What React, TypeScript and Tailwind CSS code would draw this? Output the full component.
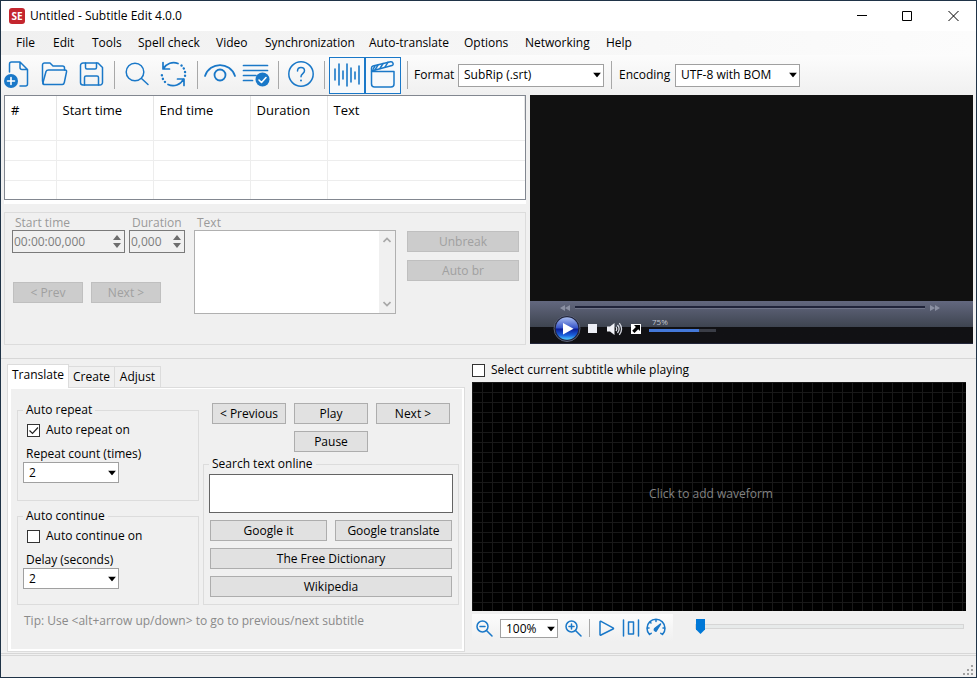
import type { ReactNode } from 'react';

const menuItems = [
  { label: 'File', width: 'w-[37px]' },
  { label: 'Edit', width: 'w-[39px]' },
  { label: 'Tools', width: 'w-[46px]' },
  { label: 'Spell check', width: 'w-[78px]' },
  { label: 'Video', width: 'w-[49px]' },
  { label: 'Synchronization', width: 'w-[104px]' },
  { label: 'Auto-translate', width: 'w-[95px]' },
  { label: 'Options', width: 'w-[61px]' },
  { label: 'Networking', width: 'w-[81px]' },
  { label: 'Help', width: 'w-[40px]' },
];

const columns = [
  { label: '#', width: 'w-[51px]' },
  { label: 'Start time', width: 'w-[97px]' },
  { label: 'End time', width: 'w-[97px]' },
  { label: 'Duration', width: 'w-[77px]' },
  { label: 'Text', width: '' },
];

const Icon = ({ children, className = 'w-7 h-7', box = '0 0 28 28' }: { children: ReactNode; className?: string; box?: string }) => (
  <svg
    viewBox={box}
    className={`shrink-0 ${className}`}
    fill="none"
    stroke="#1a78c8"
    strokeWidth="1.5"
    strokeLinecap="round"
    strokeLinejoin="round"
    aria-hidden="true"
  >
    {children}
  </svg>
);

const ToolButton = ({ label, className = '', children }: { label: string; className?: string; children: ReactNode }) => (
  <button type="button" aria-label={label} className={`flex shrink-0 items-center justify-center ${className}`}>
    {children}
  </button>
);

const Separator = ({ className = '' }: { className?: string }) => (
  <span className={`w-px shrink-0 bg-[#a8a8a8] ${className}`} />
);

const Select = ({ id, label, value, className = '' }: { id: string; label?: string; value: string; className?: string }) => (
  <span className={`relative flex shrink-0 ${className}`}>
    <select id={id} aria-label={label} className="h-full w-full appearance-none border border-[#a0a0a0] bg-white px-[5px] leading-4">
      <option>{value}</option>
    </select>
    <svg viewBox="0 0 8 5" className="pointer-events-none absolute right-[3px] top-1/2 h-[5px] w-2 -translate-y-1/2" aria-hidden="true">
      <path d="M0 0h8L4 5z" fill="#000" />
    </svg>
  </span>
);

const CheckBox = ({ label, checked = false }: { label: string; checked?: boolean }) => (
  <label className="flex h-4 items-center gap-[6px]">
    <span className="relative flex">
      <input type="checkbox" defaultChecked={checked} className="peer h-[13px] w-[13px] appearance-none border border-[#333] bg-white" />
      <svg viewBox="0 0 13 13" className="pointer-events-none absolute inset-0 hidden h-[13px] w-[13px] peer-checked:block" aria-hidden="true">
        <path d="M2.500 6.500l3 3L11 3.500" fill="none" stroke="#222" strokeWidth="1.2" />
      </svg>
    </span>
    <span>{label}</span>
  </label>
);

const PushButton = ({ label, className = '' }: { label: string; className?: string }) => (
  <button
    type="button"
    className={`flex h-[21px] items-center justify-center whitespace-nowrap border border-[#adadad] bg-[#e1e1e1] leading-4 ${className}`}
  >
    {label}
  </button>
);

const DisabledButton = ({ label, className = '' }: { label: string; className?: string }) => (
  <button
    type="button"
    disabled
    className={`flex h-[21px] items-center justify-center border border-[#bfbfbf] bg-[#cccccc] leading-4 text-[#a0a0a0] ${className}`}
  >
    {label}
  </button>
);

const Spinner = ({ id, label, value, className }: { id: string; label: string; value: string; className: string }) => (
  <div className={`flex flex-col ${className}`}>
    <label htmlFor={id} className="h-4 pl-[3px] leading-[18px] text-[#9a9a9a]">{label}</label>
    <div className="flex h-[23px] items-center border border-[#7a7a7a] pr-[3px]">
      <input id={id} disabled defaultValue={value} className="min-w-0 flex-1 pl-px leading-4 text-[#7d7d7d]" />
      <svg viewBox="0 0 8 13" className="h-[13px] w-2" fill="#6d6d6d" aria-hidden="true">
        <path d="M4 0l4 5H0zM0 8h8l-4 5z" />
      </svg>
    </div>
  </div>
);

const TitleBar = () => (
  <header className="flex h-[30px] items-center bg-white pl-2">
    <span className="flex h-4 w-4 items-center justify-center rounded-[3px] bg-[#c4262e] text-[10px] font-bold leading-4 text-white">SE</span>
    <h1 className="flex-1 pl-[5px]">Untitled - Subtitle Edit 4.0.0</h1>
    <ToolButton label="Minimize" className="h-full w-[46px]">
      <svg viewBox="0 0 11 11" className="h-[11px] w-[11px]" stroke="#000"><path d="M0 4.500h10" /></svg>
    </ToolButton>
    <ToolButton label="Maximize" className="h-full w-[45px]">
      <svg viewBox="0 0 11 11" className="h-[11px] w-[11px]" fill="none" stroke="#000"><path d="M.5.5h9v9h-9z" /></svg>
    </ToolButton>
    <ToolButton label="Close" className="h-full w-[46px]">
      <svg viewBox="0 0 11 11" className="h-[11px] w-[11px]" stroke="#000"><path d="M.5 0l10 10M10.500 0l-10 10" /></svg>
    </ToolButton>
  </header>
);

const MenuBar = () => (
  <nav className="flex h-6 items-center bg-linear-to-r from-[#f0f0f0] to-[#fcfcfc] pl-[15px]">
    {menuItems.map((item) => (
      <button key={item.label} type="button" className={`shrink-0 whitespace-nowrap text-left ${item.width}`}>
        {item.label}
      </button>
    ))}
  </nav>
);

const ToolBar = () => (
  <div className="flex h-10 items-center bg-linear-to-b from-[#fcfcfc] to-[#f0f0f0] pl-[2px]">
    <ToolButton label="New" className="mr-[10px]">
      <Icon>
        <path d="M6.500 11V3a2 2 0 0 1 2-2h8.500l7.500 7.500V23a2 2 0 0 1-2 2H17M17 1v5.500a2 2 0 0 0 2 2h5" />
        <circle cx="8" cy="20" r="7" fill="#1a78c8" stroke="none" />
        <path d="M8 16.500v7M4.500 20h7" stroke="#fff" strokeWidth="1.600" />
      </Icon>
    </ToolButton>
    <ToolButton label="Open" className="mr-[10px]">
      <Icon>
        <path d="M2.500 23L1.500 20V4a2 2 0 0 1 2-2H9l3 3h9.500a2 2 0 0 1 2 2v2" />
        <path d="M7.500 9H24q2 0 1.500 2l-2.200 10.500q-.4 2-2 2H3q-1.500 0-1-2L5 10.500Q5.500 9 7.500 9z" />
      </Icon>
    </ToolButton>
    <ToolButton label="Save" className="mr-[7px]">
      <Icon>
        <path d="M1.500 4.500A2.500 2.500 0 0 1 4 2h15l4.500 4.500v15A2.500 2.500 0 0 1 21 24H4a2.500 2.500 0 0 1-2.500-2.500z" />
        <path d="M6.500 2v4.500A1.500 1.500 0 0 0 8 8h8a1.500 1.500 0 0 0 1.500-1.500V2M5.500 24v-7.500A1.500 1.500 0 0 1 7 15h11a1.500 1.500 0 0 1 1.500 1.500V24" />
      </Icon>
    </ToolButton>
    <Separator className="mr-[9px] h-7" />
    <ToolButton label="Find" className="mr-[8px]">
      <Icon>
        <circle cx="11" cy="11" r="8.800" />
        <path d="M17.500 17.500l6.500 6" />
      </Icon>
    </ToolButton>
    <ToolButton label="Replace" className="mr-[9px]">
      <Icon>
        <path d="M3.500 7.500A11.500 11.500 0 0 1 18 2.500M3 1.500v6.500h6.500M23.500 18A11.500 11.500 0 0 1 8 23.500M24 24.500V18h-6.500" strokeWidth="1.700" />
        <path d="M21.500 4.500A11.500 11.500 0 0 1 25 15M5 21A11.500 11.500 0 0 1 2 11" strokeWidth="2.400" strokeDasharray=".1 3.600" />
      </Icon>
    </ToolButton>
    <Separator className="mr-[6px] h-7" />
    <ToolButton label="Visual sync" className="mr-[6px]">
      <Icon className="h-7 w-[32px]" box="0 0 32 28">
        <path d="M1 15C6 .5 26 .5 31 15" strokeWidth="1.800" />
        <circle cx="16" cy="14" r="5.500" strokeWidth="1.800" />
      </Icon>
    </ToolButton>
    <ToolButton label="Spell check" className="mr-[8px]">
      <Icon>
        <path d="M1.500 4.500h24M1.500 9.500h24M1.500 14.500H14M1.500 19.500h9" strokeWidth="1.700" />
        <circle cx="20.500" cy="18.500" r="7" fill="#1a78c8" stroke="none" />
        <path d="M17 19l2.500 2.500 4.500-5" stroke="#fff" strokeWidth="1.600" />
      </Icon>
    </ToolButton>
    <Separator className="mr-[8px] h-7" />
    <ToolButton label="Help" className="mr-[9px]">
      <Icon>
        <circle cx="14" cy="13" r="12.200" />
        <path d="M10.500 10q0-3.500 3.500-3.500t3.500 3.200c0 2.800-3.500 3-3.500 6" />
        <circle cx="14" cy="19.500" r="1" fill="#1a78c8" stroke="none" />
      </Icon>
    </ToolButton>
    <Separator className="mr-[4px] h-7" />
    <ToolButton label="Show waveform" className="h-[37px] w-9 border border-[#1a78c8] bg-[#f7f9fb]">
      <Icon>
        <path d="M2 8v11M6 3v21M10 10v8M14 3v22M18 7v14M22 11v7M26 5v18" strokeWidth="1.600" />
      </Icon>
    </ToolButton>
    <ToolButton label="Show video" className="mr-[6px] h-[37px] w-9 border border-[#1a78c8] bg-[#f7f9fb]">
      <Icon>
        <path d="M2.500 10.500h22.500V23a3 3 0 0 1-3 3H5.500a3 3 0 0 1-3-3z" />
        <path d="M2.500 10V7q0-1.500 1.500-2L21.500.800q2-.3 2.500 1.500t-1 2.200z" />
        <path d="M6 8.800L9 4M11 7.500l3-5M16 6.200l3-5M6 4.800l-2 3.500" />
      </Icon>
    </ToolButton>
    <Separator className="mr-[6px] h-7" />
    <label htmlFor="format" className="w-[44px] shrink-0">Format</label>
    <Select id="format" value="SubRip (.srt)" className="mr-[7px] h-[23px] w-[146px]" />
    <Separator className="mr-[7px] h-7" />
    <label htmlFor="encoding" className="w-[56px] shrink-0">Encoding</label>
    <Select id="encoding" value="UTF-8 with BOM" className="h-[23px] w-[125px]" />
  </div>
);

const SubtitleList = () => (
  <div className="border border-[#828790] bg-white">
    <table className="w-full table-fixed border-collapse text-[13px]">
      <thead>
        <tr className="h-6">
          {columns.map((column) => (
            <th key={column.label} scope="col" className={`border-r border-[#e5e5e5] p-0 pl-[6px] pt-[3px] text-left font-normal leading-4 ${column.width}`}>
              {column.label}
            </th>
          ))}
        </tr>
      </thead>
      <tbody>
        {[0, 1, 2, 3].map((row) => (
          <tr key={row} className="h-5 border-b border-[#ededed] last:h-[19px] last:border-b-0">
            {columns.map((column) => (
              <td key={column.label} className="border-r border-[#ededed] p-0 last:border-r-0" />
            ))}
          </tr>
        ))}
      </tbody>
    </table>
  </div>
);

const EditPanel = () => (
  <section className="mt-2 flex h-[133px] border border-[#dcdcdc] pl-[7px] pr-[6px] pt-px">
    <div className="flex w-[182px] flex-col">
      <div className="flex gap-1">
        <Spinner id="start" label="Start time" value="00:00:00,000" className="w-[113px]" />
        <Spinner id="duration" label="Duration" value="0,000" className="w-[56px]" />
      </div>
      <div className="mt-[29px] flex gap-2 pl-px">
        <DisabledButton label="< Prev" className="w-[70px]" />
        <DisabledButton label="Next >" className="w-[70px]" />
      </div>
    </div>
    <div className="flex flex-1 flex-col">
      <label htmlFor="text" className="h-4 pl-[3px] leading-[18px] text-[#9a9a9a]">Text</label>
      <div className="flex h-[84px] border border-[#b0b0b0] bg-white">
        <textarea id="text" disabled className="min-w-0 flex-1 resize-none" />
        <div className="flex w-4 flex-col items-center justify-between bg-[#f0f0f0] py-[6px]">
          <svg viewBox="0 0 8 6" className="h-[6px] w-2" fill="none" stroke="#a8a8a8" strokeWidth="1.700"><path d="M.5 5L4 1.500 7.500 5" /></svg>
          <svg viewBox="0 0 8 6" className="h-[6px] w-2" fill="none" stroke="#a8a8a8" strokeWidth="1.700"><path d="M.5 1L4 4.500 7.500 1" /></svg>
        </div>
      </div>
    </div>
    <div className="ml-[11px] flex w-[112px] flex-col gap-2 pt-[17px]">
      <DisabledButton label="Unbreak" />
      <DisabledButton label="Auto br" />
    </div>
  </section>
);

const VideoPlayer = () => (
  <section className="flex h-[249px] flex-col bg-[#111111]">
    <div className="flex-1" />
    <div className="flex h-[43px] flex-col border-b border-[#23263a] bg-linear-to-b from-[#63687f] from-0% via-[#3e4450] via-62% to-[#111114] to-63%">
      <div className="flex h-[13px] items-center pl-[30px] pr-[33px]">
        <svg viewBox="0 0 10 6" className="h-[6px] w-[10px]" fill="#8b90a2"><path d="M5 0v6L0 3zM10 0v6L5 3z" /></svg>
        <input
          type="range"
          aria-label="Position"
          defaultValue={0}
          className="mx-[5px] h-[3px] min-w-0 flex-1 appearance-none border-b border-[#6f7488] bg-[#20243a] [&::-webkit-slider-thumb]:h-0 [&::-webkit-slider-thumb]:w-0 [&::-webkit-slider-thumb]:appearance-none"
        />
        <svg viewBox="0 0 10 6" className="h-[6px] w-[10px]" fill="#8b90a2"><path d="M0 0v6l5-3zM5 0v6l5-3z" /></svg>
      </div>
      <div className="flex flex-1 items-center pl-[23px]">
        <ToolButton label="Play video" className="mr-[7px]">
          <svg viewBox="0 0 28 28" className="h-7 w-7">
            <defs>
              <linearGradient id="orb" x1="0" y1="0" x2="0" y2="1">
                <stop offset="0" stopColor="#a9bdf0" />
                <stop offset=".48" stopColor="#3553c8" />
                <stop offset=".52" stopColor="#0a1a96" />
                <stop offset=".8" stopColor="#1b62dc" />
                <stop offset="1" stopColor="#4fd0ff" />
              </linearGradient>
            </defs>
            <circle cx="14" cy="13.500" r="13" fill="#20243a" stroke="#5b6176" />
            <circle cx="14" cy="13.500" r="11.300" fill="url(#orb)" />
            <path d="M10 8v11.500l10.500-5.700z" fill="#fff" />
          </svg>
        </ToolButton>
        <ToolButton label="Stop" className="mr-[10px]">
          <span className="h-[9px] w-[9px] bg-[#eceef5]" />
        </ToolButton>
        <ToolButton label="Mute" className="mr-[8px]">
          <svg viewBox="0 0 16 14" className="h-[14px] w-4" fill="none" stroke="#d8dbe4" strokeWidth="1.300">
            <path d="M0 4.500h3L7.500 1v12L3 9.500H0z" fill="#f0f1f6" stroke="none" />
            <path d="M9 5q1.500 2 0 4M10.500 3q3.200 4 0 8M12.300 1.200q4.500 5.800 0 11.600" />
          </svg>
        </ToolButton>
        <ToolButton label="Full screen" className="mr-[8px]">
          <svg viewBox="0 0 10 10" className="h-[10px] w-[10px]">
            <path d="M0 0h10v10H0z" fill="#fff" />
            <path d="M3 1h6v6L7.200 5.200 3.500 9 1.200 6.700 4.900 2.900z" fill="#000" />
          </svg>
        </ToolButton>
        <label className="flex flex-col text-[8px] leading-[10px] text-[#c5c8d2]">
          <span className="pl-[3px]">75%</span>
          <input
            type="range"
            defaultValue={75}
            className="mb-[9px] mt-[2px] h-[3px] w-[67px] appearance-none bg-linear-to-r from-[#4478d8] from-74% to-[#3a3d46] to-74% [&::-webkit-slider-thumb]:h-0 [&::-webkit-slider-thumb]:w-0 [&::-webkit-slider-thumb]:appearance-none"
          />
        </label>
      </div>
    </div>
  </section>
);

const RepeatGroup = ({ title, option, checked, selectId, selectLabel, className = '' }: {
  title: string;
  option: string;
  checked?: boolean;
  selectId: string;
  selectLabel: string;
  className?: string;
}) => (
  <fieldset className={`border border-[#dcdcdc] pl-[5px] ${className}`}>
    <legend className="h-4 px-[3px] leading-4">{title}</legend>
    <div className="flex flex-col items-start">
      <div className="mt-1 pl-1">
        <CheckBox label={option} checked={checked} />
      </div>
      <label htmlFor={selectId} className="mt-2 h-4 pl-[3px] leading-4">{selectLabel}</label>
      <Select id={selectId} value="2" className="h-[21px] w-24" />
    </div>
  </fieldset>
);

const TranslateTab = () => (
  <section className="flex w-[458px] flex-col pt-[5px]">
    <div role="tablist" className="flex h-[23px] items-end">
      <button type="button" role="tab" aria-selected="true" className="z-10 -mb-px h-6 w-[62px] border border-b-0 border-[#dcdcdc] bg-white pb-[3px]">Translate</button>
      <button type="button" role="tab" aria-selected="false" className="h-[21px] w-[46px] border border-b-0 border-l-0 border-[#dcdcdc]">Create</button>
      <button type="button" role="tab" aria-selected="false" className="h-[21px] w-[46px] border border-b-0 border-l-0 border-[#dcdcdc]">Adjust</button>
    </div>
    <div role="tabpanel" className="flex flex-1 flex-col border border-[#dcdcdc] bg-white pb-[2px] pl-[3px] pr-[2px] pt-px">
      <div className="flex-1 bg-[#f0f0f0] pl-[6px] pr-[3px] pt-[13px]">
        <div className="flex gap-1">
          <div className="w-[182px]">
            <RepeatGroup title="Auto repeat" option="Auto repeat on" checked selectId="repeat-count" selectLabel="Repeat count (times)" className="h-[99px]" />
            <RepeatGroup title="Auto continue" option="Auto continue on" selectId="delay" selectLabel="Delay (seconds)" className="mt-[7px] h-[97px]" />
          </div>
          <div className="flex-1">
            <div className="mt-px grid grid-cols-[74px_74px_74px] gap-x-2 gap-y-[7px] pl-[9px]">
              <PushButton label="< Previous" />
              <PushButton label="Play" />
              <PushButton label="Next >" />
              <PushButton label="Pause" className="col-start-2" />
            </div>
            <fieldset className="mt-[4px] h-[149px] border border-[#dcdcdc] px-[5px]">
              <legend className="h-4 px-[3px] leading-4">Search text online</legend>
              <textarea aria-label="Search text online" className="mt-[2px] block h-[39px] w-full resize-none border border-[#646464] bg-white" />
              <div className="flex flex-col gap-[7px] px-px pt-[7px]">
                <div className="grid grid-cols-2 gap-2">
                  <PushButton label="Google it" />
                  <PushButton label="Google translate" />
                </div>
                <PushButton label="The Free Dictionary" />
                <PushButton label="Wikipedia" />
              </div>
            </fieldset>
          </div>
        </div>
        <p className="mt-2 pl-[7px] leading-4 text-[#8a8a8a]">Tip: Use &lt;alt+arrow up/down&gt; to go to previous/next subtitle</p>
      </div>
    </div>
  </section>
);

const Waveform = () => (
  <section className="flex min-w-0 flex-1 flex-col pt-[3px]">
    <CheckBox label="Select current subtitle while playing" />
    <div className="mt-1 flex h-[229px] items-center justify-center bg-black bg-[linear-gradient(#191919_1px,transparent_1px),linear-gradient(90deg,#191919_1px,transparent_1px)] bg-[size:10px_10px] pr-[16px] pb-[6px] text-[#828282]">
      Click to add waveform
    </div>
    <div className="mt-[3px] flex">
      <div className="flex h-[27px] w-[201px] items-center bg-linear-to-b from-[#fcfcfc] to-[#f0f0f0] pl-[3px]">
        <ToolButton label="Zoom out" className="mr-[7px]">
          <Icon className="h-[18px] w-[18px]" box="0 0 18 18">
            <circle cx="7.500" cy="7.500" r="5.500" />
            <path d="M11.500 11.500l5.500 5.500M5 7.500h5" />
          </Icon>
        </ToolButton>
        <Select id="zoom" label="Zoom" value="100%" className="mr-[6px] mt-[2px] h-[19px] w-[58px]" />
        <ToolButton label="Zoom in" className="mr-[7px]">
          <Icon className="h-[18px] w-[18px]" box="0 0 18 18">
            <circle cx="7.500" cy="7.500" r="5.500" />
            <path d="M11.500 11.500l5.500 5.500M5 7.500h5M7.500 5v5" />
          </Icon>
        </ToolButton>
        <Separator className="mr-[8px] h-[18px]" />
        <ToolButton label="Play waveform" className="mr-[6px]">
          <Icon className="h-[18px] w-[18px]" box="0 0 18 18">
            <path d="M2 3v12.500q0 1 1 .5l12-6q1-.6 0-1.200L3 2.300Q2 2 2 3z" />
          </Icon>
        </ToolButton>
        <ToolButton label="Center" className="mr-[6px]">
          <Icon className="h-[18px] w-[18px]" box="0 0 18 18">
            <path d="M1.500 1v16M16.500 1v16M6.500 3h5v12h-5z" />
          </Icon>
        </ToolButton>
        <ToolButton label="Playback speed">
          <Icon className="h-[20px] w-[20px]" box="0 0 20 20">
            <path d="M3.500 16.500A9 9 0 1 1 16.500 16.500M3.500 16.500l1.700-1.200M16.500 16.500l-1.700-1.200M10 1.500v2M1.500 10h1.500M17 10h1.500M4 4l1 1" />
            <path d="M8.300 12l1 1 .8.200L14.500 6 8.700 10.500z" fill="#1a78c8" />
          </Icon>
        </ToolButton>
      </div>
      <input
        type="range"
        aria-label="Scroll position"
        defaultValue={0}
        className="ml-[22px] mr-[2px] mt-[10px] h-[5px] min-w-0 flex-1 appearance-none border border-[#d6d6d6] bg-[#e7eaea] [&::-webkit-slider-thumb]:h-[15px] [&::-webkit-slider-thumb]:w-[9px] [&::-webkit-slider-thumb]:appearance-none [&::-webkit-slider-thumb]:bg-[#0078d7] [&::-webkit-slider-thumb]:[clip-path:polygon(0_0,100%_0,100%_70%,50%_100%,0_70%)]"
      />
    </div>
  </section>
);

const StatusBar = () => (
  <footer className="mt-px flex h-[22px] items-end justify-end border-t border-[#d7d7d7] pb-[2px] pr-[3px]">
    <svg viewBox="0 0 10 10" className="h-[10px] w-[10px]" fill="#a0a0a0" aria-hidden="true">
      <path d="M8 0h2v2H8zM4 4h2v2H4zM8 4h2v2H8zM0 8h2v2H0zM4 8h2v2H4zM8 8h2v2H8z" />
    </svg>
  </footer>
);

export default function App() {
  return (
    <div className="flex min-h-screen flex-col border border-[#1f3347] bg-[#f0f0f0] font-['Open_Sans','Noto_Sans',sans-serif] text-[12px] leading-4 text-black">
      <TitleBar />
      <MenuBar />
      <ToolBar />
      <main className="flex flex-1 flex-col">
        <div className="grid grid-cols-[522fr_443fr] gap-1 px-[3px]">
          <div>
            <div className="bg-white pb-1">
              <SubtitleList />
            </div>
            <EditPanel />
          </div>
          <VideoPlayer />
        </div>
        <div className="mt-[13px] flex flex-1 gap-[7px] border-y border-[#d7d7d7] pb-px pl-[6px] pr-[10px]">
          <TranslateTab />
          <Waveform />
        </div>
      </main>
      <StatusBar />
    </div>
  );
}
